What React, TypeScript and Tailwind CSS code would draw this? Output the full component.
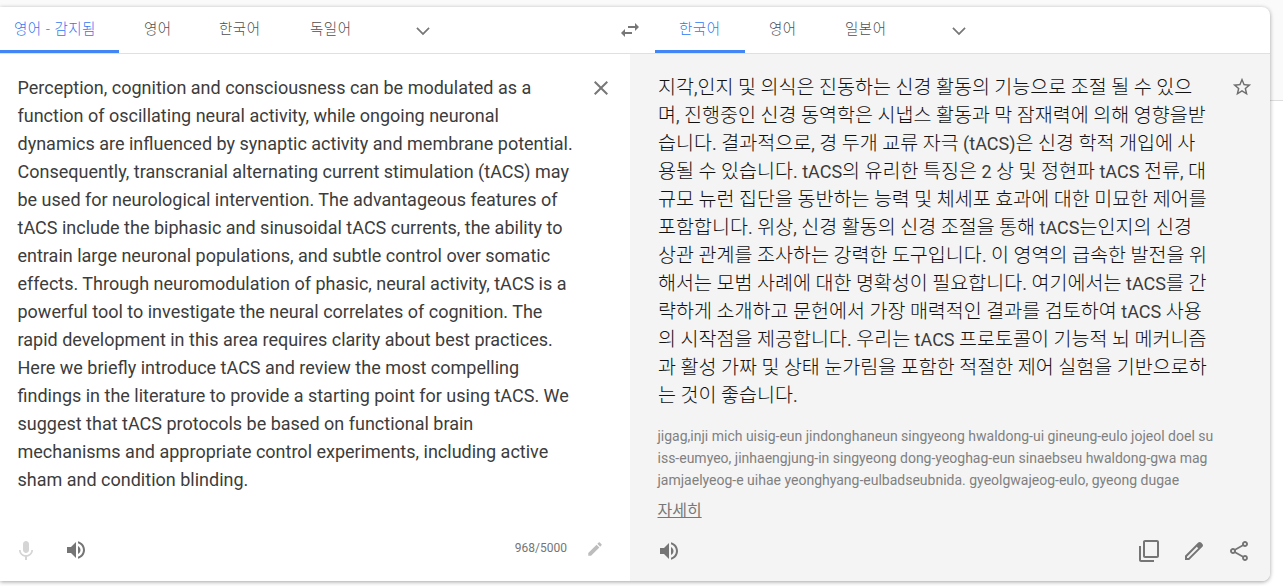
import React from 'react';

const SOURCE_LINES = [
  'Perception, cognition and consciousness can be modulated as a',
  'function of oscillating neural activity, while ongoing neuronal',
  'dynamics are influenced by synaptic activity and membrane potential.',
  'Consequently, transcranial alternating current stimulation (tACS) may',
  'be used for neurological intervention. The advantageous features of',
  'tACS include the biphasic and sinusoidal tACS currents, the ability to',
  'entrain large neuronal populations, and subtle control over somatic',
  'effects. Through neuromodulation of phasic, neural activity, tACS is a',
  'powerful tool to investigate the neural correlates of cognition. The',
  'rapid development in this area requires clarity about best practices.',
  'Here we briefly introduce tACS and review the most compelling',
  'findings in the literature to provide a starting point for using tACS. We',
  'suggest that tACS protocols be based on functional brain',
  'mechanisms and appropriate control experiments, including active',
  'sham and condition blinding.',
];

const TARGET_LINES = [
  '지각,인지 및 의식은 진동하는 신경 활동의 기능으로 조절 될 수 있으',
  '며, 진행중인 신경 동역학은 시냅스 활동과 막 잠재력에 의해 영향을받',
  '습니다. 결과적으로, 경 두개 교류 자극 (tACS)은 신경 학적 개입에 사',
  '용될 수 있습니다. tACS의 유리한 특징은 2 상 및 정현파 tACS 전류, 대',
  '규모 뉴런 집단을 동반하는 능력 및 체세포 효과에 대한 미묘한 제어를',
  '포함합니다. 위상, 신경 활동의 신경 조절을 통해 tACS는인지의 신경',
  '상관 관계를 조사하는 강력한 도구입니다. 이 영역의 급속한 발전을 위',
  '해서는 모범 사례에 대한 명확성이 필요합니다. 여기에서는 tACS를 간',
  '략하게 소개하고 문헌에서 가장 매력적인 결과를 검토하여 tACS 사용',
  '의 시작점을 제공합니다. 우리는 tACS 프로토콜이 기능적 뇌 메커니즘',
  '과 활성 가짜 및 상태 눈가림을 포함한 적절한 제어 실험을 기반으로하',
  '는 것이 좋습니다.',
];

const ROMANIZED_LINES = [
  'jigag,inji mich uisig-eun jindonghaneun singyeong hwaldong-ui gineung-eulo jojeol doel su',
  'iss-eumyeo, jinhaengjung-in singyeong dong-yeoghag-eun sinaebseu hwaldong-gwa mag',
  'jamjaelyeog-e uihae yeonghyang-eulbadseubnida. gyeolgwajeog-eulo, gyeong dugae',
];

const ICONS = {
  chevron: 'M5.41 7.59L4 9l8 8 8-8-1.41-1.41L12 14.17',
  swap: 'M6.99 11L3 15l3.99 4v-3H14v-2H6.99v-3zM21 9l-3.99-4v3H10v2h7.01v3L21 9z',
  close: 'M19 6.41L17.59 5 12 10.59 6.41 5 5 6.41 10.59 12 5 17.59 6.41 19 12 13.41 17.59 19 19 17.59 13.41 12z',
  star: 'M22 9.24l-7.19-.62L12 2 9.19 8.63 2 9.24l5.46 4.73L5.82 21 12 17.27 18.18 21l-1.63-7.03L22 9.24zM12 15.4l-3.76 2.27 1-4.28-3.32-2.88 4.38-.38L12 6.1l1.71 4.04 4.38.38-3.32 2.88 1 4.28L12 15.4z',
  mic: 'M12 15c1.66 0 2.99-1.34 2.99-3L15 6c0-1.66-1.34-3-3-3S9 4.34 9 6v6c0 1.66 1.34 3 3 3zm5.3-3c0 3-2.54 5.1-5.3 5.1S6.7 15 6.7 12H5c0 3.42 2.72 6.23 6 6.72V22h2v-3.28c3.28-.48 6-3.3 6-6.72h-1.7z',
  volume: 'M3 9v6h4l5 5V4L7 9H3zm13.5 3c0-1.77-1.02-3.29-2.5-4.03v8.05c1.48-.73 2.5-2.25 2.5-4.02zM14 3.23v2.06c2.89.86 5 3.54 5 6.71s-2.11 5.85-5 6.71v2.06c4.01-.91 7-4.49 7-8.77s-2.99-7.86-7-8.77z',
  pencil: 'M3 17.25V21h3.75L17.81 9.94l-3.75-3.75L3 17.25zM20.71 7.04c.39-.39.39-1.02 0-1.41l-2.34-2.34c-.39-.39-1.02-.39-1.41 0l-1.83 1.83 3.75 3.75 1.83-1.83z',
  copy: 'M3 7H1v14c0 1.1.9 2 2 2h13v-2H3V7zm16-6H7c-1.1 0-2 .9-2 2v14c0 1.1.9 2 2 2h12c1.1 0 2-.9 2-2V3c0-1.1-.9-2-2-2zm0 16H7V3h12v14z',
  edit: 'M20.41 4.94l-1.35-1.35c-.78-.78-2.05-.78-2.83 0L3 16.82V21h4.18L20.41 7.77c.79-.78.79-2.05 0-2.83zM6.41 19.06L5 19v-1.36l9.82-9.82 1.41 1.41-9.82 9.83z',
  share: 'M18 16.08c-.76 0-1.44.3-1.96.77L8.91 12.7c.05-.23.09-.46.09-.7s-.04-.47-.09-.7l7.05-4.11c.54.5 1.25.81 2.04.81 1.66 0 3-1.34 3-3s-1.34-3-3-3-3 1.34-3 3c0 .24.04.47.09.7L8.04 9.81C7.5 9.31 6.79 9 6 9c-1.66 0-3 1.34-3 3s1.34 3 3 3c.79 0 1.5-.31 2.04-.81l7.12 4.16c-.05.21-.08.43-.08.65 0 1.61 1.31 2.92 2.92 2.92s2.92-1.31 2.92-2.92-1.31-2.92-2.92-2.92zM18 4c.55 0 1 .45 1 1s-.45 1-1 1-1-.45-1-1 .45-1 1-1zM6 13c-.55 0-1-.45-1-1s.45-1 1-1 1 .45 1 1-.45 1-1 1zm12 7.02c-.55 0-1-.45-1-1s.45-1 1-1 1 .45 1 1-.45 1-1 1z',
};

interface IconProps {
  name: keyof typeof ICONS;
  className?: string;
}

const Icon: React.FC<IconProps> = ({ name, className = 'size-6' }) => (
  <svg viewBox="0 0 24 24" fill="currentColor" className={`shrink-0 ${className}`}>
    <path d={ICONS[name]} />
  </svg>
);

interface TabProps {
  label: string;
  active?: boolean;
  className: string;
}

const Tab: React.FC<TabProps> = ({ label, active, className }) => (
  <button
    className={`h-[46px] shrink-0 whitespace-nowrap border-b-[3px] pt-[3px] text-left text-[14.5px] font-light tracking-[0.5px] ${
      active ? 'border-[#4285f4] text-[#2f78f2]' : 'border-transparent text-[#505050]'
    } ${className}`}
  >
    {label}
  </button>
);

const Lines: React.FC<{ lines: string[] }> = ({ lines }) => (
  <>
    {lines.map((line) => (
      <span key={line} className="block whitespace-nowrap">
        {line}
      </span>
    ))}
  </>
);

// Hangul is set lighter and a little larger than the Latin text around it
const KoreanLine: React.FC<{ text: string }> = ({ text }) => (
  <span className="block h-7 whitespace-nowrap">
    {text.split(/([가-힣]+)/).map((run, i) =>
      i % 2 ? (
        <span key={i} className="text-[19.57px] font-light text-[#111]">
          {run}
        </span>
      ) : (
        run
      )
    )}
  </span>
);

const LanguageBar: React.FC = () => (
  <div className="flex h-[47px] items-start border-b border-[#e0e0e0] text-[#777]">
    <div className="flex w-[655px] shrink-0">
      <Tab label="영어 - 감지됨" active className="w-[119px] pl-[14px]" />
      <Tab label="영어" className="w-[75px] pl-[25px]" />
      <Tab label="한국어" className="w-[91px] pl-[25px]" />
      <Tab label="독일어" className="w-[91px] pl-[25px]" />
      <Icon name="chevron" className="ml-[37px] mt-3.5 size-5" />
      <Icon name="swap" className="ml-auto mr-[13px] mt-[11px] size-6" />
    </div>
    <Tab label="한국어" active className="w-[90px] pl-6" />
    <Tab label="영어" className="w-[76px] pl-6" />
    <Tab label="일본어" className="w-[91px] pl-6" />
    <Icon name="chevron" className="ml-[37px] mt-3.5 size-5" />
  </div>
);

const SourcePane: React.FC = () => (
  <div className="flex w-[630px] shrink-0 flex-col justify-between">
    <div className="flex justify-between">
      <p className="pl-[17.5px] pt-5 text-lg leading-7 text-[#3c3c3c]">
        <Lines lines={SOURCE_LINES} />
      </p>
      <Icon name="close" className="mr-[17px] mt-[22px] size-6 text-[#777]" />
    </div>
    <div className="flex h-[50px] items-start text-[#757575]">
      <Icon name="mic" className="ml-[14px] mt-[7px] size-6 text-[#d5d5d5]" />
      <Icon name="volume" className="ml-[26px] mt-[7px] size-6" />
      <span className="ml-auto mt-[7px] text-xs leading-5">968/5000</span>
      <Icon name="pencil" className="ml-[19px] mr-[26px] mt-[9px] size-[18px] text-[#bdbdbd]" />
    </div>
  </div>
);

const TargetPane: React.FC = () => (
  <div className="flex flex-1 flex-col justify-between bg-[#f4f4f4]">
    <div className="flex justify-between">
      <div className="pl-7 pt-5">
        <p className="text-lg leading-7 text-[#3c3c3c]">
          {TARGET_LINES.map((line) => (
            <KoreanLine key={line} text={line} />
          ))}
        </p>
        <div className="-ml-[0.5px] mt-[15px] text-[#808080]">
          <p className="text-sm leading-[22px]">
            <Lines lines={ROMANIZED_LINES} />
          </p>
          <a href="#" className="mt-2 inline-block text-base leading-6 text-[#777] underline">
            자세히
          </a>
        </div>
      </div>
      <Icon name="star" className="mr-[17px] mt-[22px] size-[22px] text-[#6e6e6e]" />
    </div>
    <div className="flex h-[50px] shrink-0 items-start text-[#757575]">
      <Icon name="volume" className="ml-[27px] mt-2 size-6" />
      <Icon name="copy" className="ml-auto mt-2 size-6" />
      <Icon name="edit" className="ml-5 mt-2 size-6" />
      <Icon name="share" className="ml-[21px] mr-[19px] mt-2 size-6" />
    </div>
  </div>
);

const App: React.FC = () => (
  <div
    lang="ko"
    className="h-[586px] w-[1283px] overflow-hidden bg-white bg-[linear-gradient(#fafafa_100px,#ddd_100px,#ddd_101px,#fff_101px)] pt-[7px] font-['Roboto','Noto_Sans_CJK_KR',sans-serif]"
  >
    <main className="flex h-[574px] w-[1270px] flex-col overflow-hidden rounded-r-lg bg-white shadow-[0_1px_4px_rgba(0,0,0,0.37)]">
      <LanguageBar />
      <div className="flex flex-1">
        <SourcePane />
        <TargetPane />
      </div>
    </main>
  </div>
);

export default App;
